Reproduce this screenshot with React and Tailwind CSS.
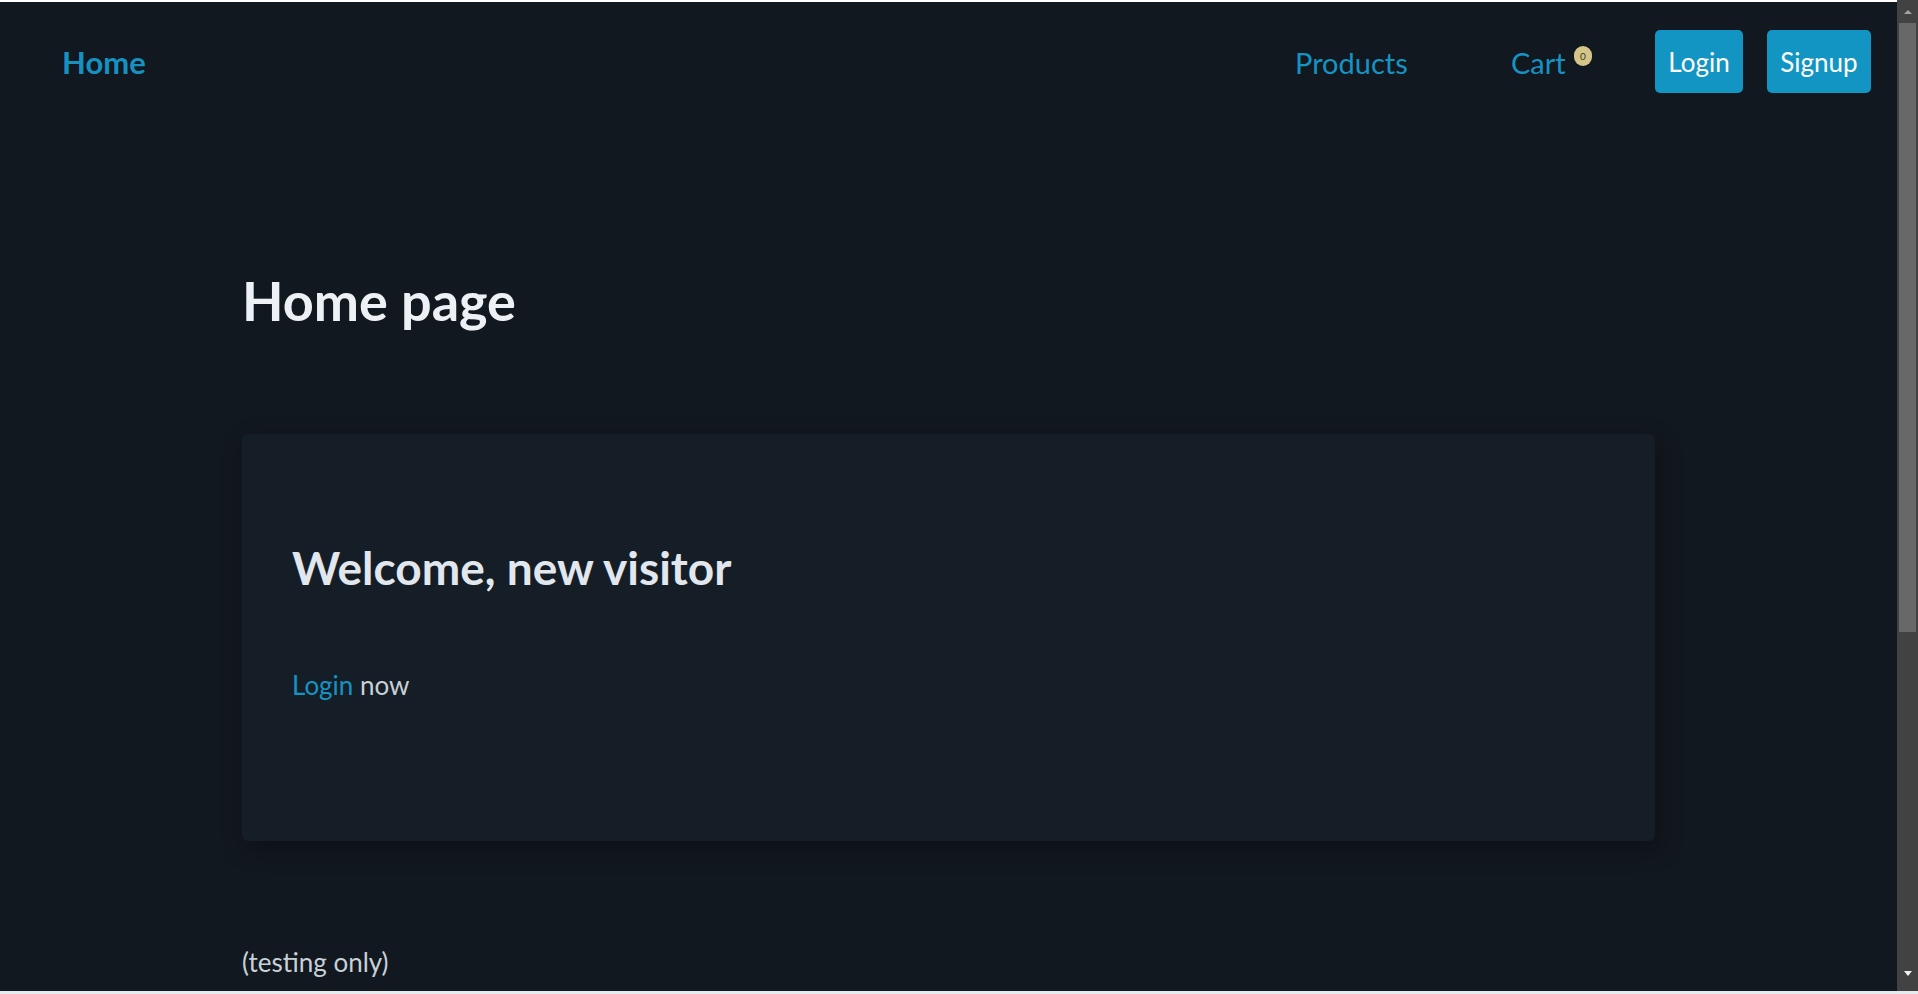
export default function App() {
  return (
    <div className="w-[1918px] h-[994px] flex flex-col overflow-hidden bg-[#12181f] font-['Lato',sans-serif]">
      <div className="h-[991px] flex">
        <div className="flex-1 min-w-0 flex flex-col">
          <div className="h-[2px] bg-white" />
          <nav className="h-[119px] flex items-center pl-[62px] pr-[26px]">
            <a className="text-[31px] leading-[37px] font-bold text-[#1591c2] mt-[2px]">Home</a>
            <div className="ml-auto flex items-center">
              <a className="w-[115px] text-[29px] leading-[35px] text-[#1593c3] mt-[2px]">Products</a>
              <div className="ml-[101px] flex items-center mt-[2px]">
                <span className="w-[55px] text-[29px] leading-[35px] text-[#1593c3]">Cart</span>
                <span className="ml-[8px] mb-[13px] w-[18px] h-[20px] rounded-full bg-[#d4c689] text-[#3b3a2c] text-[10px] leading-none flex items-center justify-center">0</span>
              </div>
              <button className="ml-[63px] w-[88px] h-[63px] rounded-[5px] bg-[#1395c3] text-white text-[26px] leading-none flex items-center justify-center">Login</button>
              <button className="ml-[24px] w-[104px] h-[63px] rounded-[5px] bg-[#1395c3] text-white text-[26px] leading-none flex items-center justify-center">Signup</button>
            </div>
          </nav>
          <main className="w-[1413px] mx-auto">
            <h1 className="mt-[147px] text-[54px] leading-[65px] font-bold text-[#edf1f5]">Home page</h1>
            <section className="mt-[101px] h-[407px] rounded-[6px] bg-[#151e27] shadow-[4px_8px_24px_rgba(0,0,0,0.3)] pt-[106px] px-[50px]">
              <h2 className="text-[46px] leading-[55px] font-bold text-[#e1e7ed]">Welcome, new visitor</h2>
              <p className="mt-[75px] text-[26px] leading-[31px] text-[#c9d0d7]">
                <a className="text-[#1593c3]">Login</a> now
              </p>
            </section>
            <p className="mt-[106px] text-[26px] leading-[31px] text-[#c8d0d8]">(testing only)</p>
          </main>
        </div>
        <div className="w-[21px] bg-[#424242] flex flex-col items-center">
          <div className="h-[23px] w-full flex items-center justify-center">
            <div className="w-0 h-0 border-l-[4px] border-r-[4px] border-b-[4px] border-l-transparent border-r-transparent border-b-[#a3a3a3]" />
          </div>
          <div className="h-[609px] w-[17px] bg-[#686868]" />
          <div className="flex-1" />
          <div className="h-[23px] w-full flex items-start justify-center pt-[3px]">
            <div className="w-0 h-0 border-l-[4.5px] border-r-[4.5px] border-t-[5px] border-l-transparent border-r-transparent border-t-[#f2f2f2]" />
          </div>
        </div>
      </div>
      <div className="h-[3px] bg-[#e6ebee]" />
    </div>
  );
}
